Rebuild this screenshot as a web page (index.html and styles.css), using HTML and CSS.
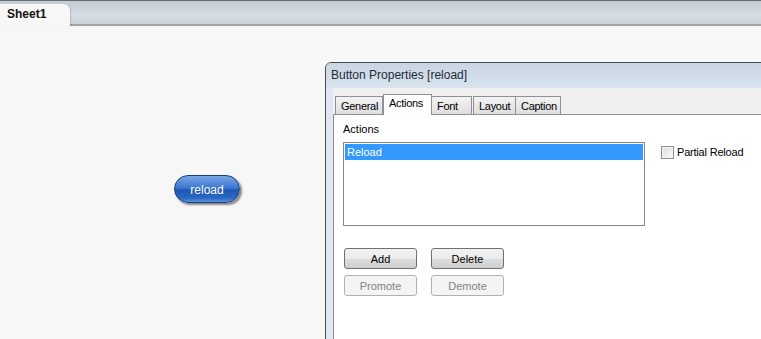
FILE: index.html
```html
<!DOCTYPE html>
<html lang="en">
<head>
  <meta charset="UTF-8" />
  <title>Sheet1</title>
  <link rel="stylesheet" href="styles.css">
</head>
<body>
<div class="sheet-tabs">
  <div class="sheet-tab">Sheet1</div>
</div>

<div class="sheet">
  <button class="reload-btn">reload</button>

  <div class="dialog">
    <div class="dialog-title">Button Properties [reload]</div>
    <div class="dialog-body">
      <div class="tabs">
        <div class="tab tab-general">General</div>
        <div class="tab tab-actions active">Actions</div>
        <div class="tab tab-font">Font</div>
        <div class="tab tab-layout">Layout</div>
        <div class="tab tab-caption">Caption</div>
      </div>
      <div class="tab-panel">
        <div class="panel-label">Actions</div>
        <div class="actions-row">
          <div class="listbox">
            <div class="list-item selected">Reload</div>
          </div>
          <label class="check">
            <span class="check-box"></span>
            Partial Reload
          </label>
        </div>
        <div class="btn-row">
          <button class="win-btn">Add</button>
          <button class="win-btn">Delete</button>
        </div>
        <div class="btn-row">
          <button class="win-btn" disabled>Promote</button>
          <button class="win-btn" disabled>Demote</button>
        </div>
      </div>
    </div>
  </div>
</div>
</body>
</html>
```

FILE: styles.css
```css
body {
  margin: 0;
  font-family: 'Liberation Sans', Arial, sans-serif;
  background-color: #f7f7f7;
  width: 761px;
  height: 339px;
  overflow: hidden;
}

.sheet-tabs {
  height: 23px;
  border-top: 1px solid #6b6b6b;
  border-bottom: 2px solid #9ea2a6;
  background: linear-gradient(#c2cdd5, #d5dce2 60%, #ccd3d9);
  display: flex;
  align-items: flex-end;
}

.sheet-tab {
  width: 63px;
  height: 22px;
  margin-bottom: -2px;
  padding-left: 7px;
  background-color: #f7f7f7;
  border-top-right-radius: 6px;
  box-shadow: 1px 0 1px rgba(0, 0, 0, 0.15);
  font-weight: bold;
  font-size: 12px;
  color: #111;
  line-height: 21px;
}

.sheet {
  position: relative;
  height: 313px;
}

.reload-btn {
  position: absolute;
  left: 174px;
  top: 149px;
  width: 66px;
  height: 28px;
  border: 1px solid #1b3d78;
  border-radius: 14px;
  background: linear-gradient(#7aa6e4, #3c78d2 45%, #1f58b4 55%, #2a68c4 85%, #5a94e0);
  box-shadow: 2px 2px 2px rgba(0, 0, 0, 0.45);
  color: #fff;
  font-family: 'Liberation Sans', Arial, sans-serif;
  font-size: 12px;
  padding: 2px 0 0;
}

.dialog {
  position: absolute;
  left: 325px;
  top: 36px;
  width: 460px;
  height: 300px;
  border: 1px solid #4c4c4c;
  border-top-left-radius: 6px;
  background-color: #dfe7f0;
  overflow: hidden;
}

.dialog-title {
  height: 25px;
  padding-left: 5px;
  background: linear-gradient(#c8d5e2, #d9e4ef);
  font-size: 12px;
  line-height: 25px;
  color: #1e2a38;
}

.dialog-body {
  height: 100%;
  margin-left: 7px;
  padding-top: 6px;
  background-color: #f0f0f0;
  font-size: 11px;
  color: #000;
}

.tabs {
  display: flex;
  align-items: flex-end;
  height: 20px;
  padding-left: 2px;
}

.tab {
  height: 18px;
  padding-left: 5px;
  border: 1px solid #8d9096;
  border-bottom: none;
  background: linear-gradient(#f3f3f3, #dedede);
  line-height: 19px;
  box-sizing: border-box;
  letter-spacing: -0.3px;
  white-space: nowrap;
}

.tab-general { width: 48px; }
.tab-actions { width: 49px; }
.tab-font { width: 41px; margin-left: -1px; }
.tab-layout { width: 43px; margin-left: 1px; }
.tab-caption { width: 46px; margin-left: -1px; }

.tab.active {
  height: 21px;
  margin-bottom: -1px;
  position: relative;
  background: #fff;
  line-height: 17px;
  z-index: 1;
}

.tab-panel {
  border-top: 1px solid #8d9096;
  border-left: 1px solid #8d9096;
  background-color: #fff;
  height: 100%;
  padding: 8px 0 0 9px;
}

.panel-label {
  height: 19px;
}

.actions-row {
  display: flex;
  gap: 16px;
}

.listbox {
  width: 298px;
  height: 80px;
  border: 1px solid #828790;
  padding: 1px;
}

.list-item {
  height: 16px;
  padding-left: 2px;
  line-height: 16px;
  font-size: 11px;
}

.list-item.selected {
  background-color: #3399ff;
  color: #fff;
}

.check {
  display: flex;
  align-items: center;
  gap: 3px;
  height: 16px;
  margin-top: 2px;
  font-size: 11px;
  letter-spacing: -0.2px;
}

.check-box {
  width: 11px;
  height: 11px;
  border: 1px solid #8f8f8f;
  background: linear-gradient(135deg, #dcdcdc, #fbfbfb);
  box-shadow: inset 0 0 0 1px #f4f4f4;
}

.btn-row {
  display: flex;
  gap: 14px;
  margin-left: 1px;
}

.actions-row + .btn-row {
  margin-top: 22px;
}

.btn-row + .btn-row {
  margin-top: 6px;
}

.win-btn {
  width: 73px;
  height: 21px;
  padding: 0;
  border: 1px solid #707070;
  border-radius: 3px;
  background: linear-gradient(#f2f2f2, #ebebeb 50%, #dddddd 51%, #cfcfcf);
  font-family: 'Liberation Sans', Arial, sans-serif;
  font-size: 11px;
  color: #000;
}

.win-btn:disabled {
  border-color: #adb2b5;
  background: #f4f4f4;
  color: #838383;
}
```
